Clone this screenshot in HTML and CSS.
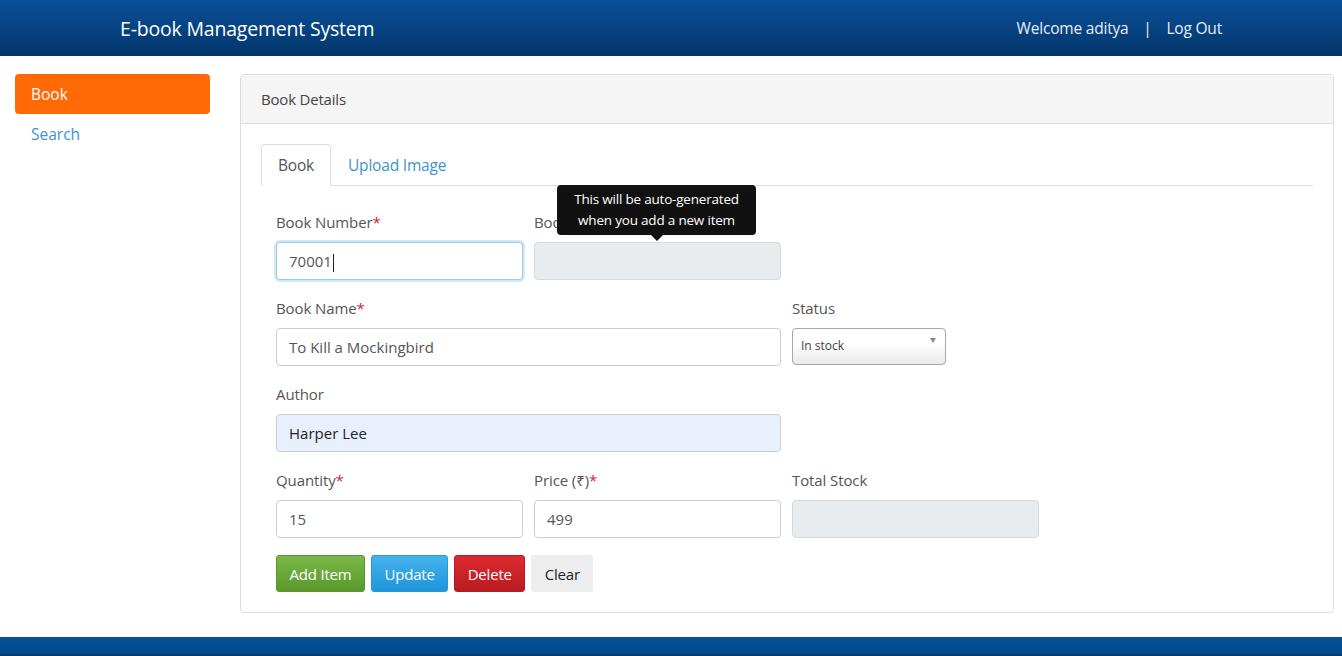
FILE: index.html
```html
<!DOCTYPE html>
<html>
<head>
<meta charset="utf-8">
<title>E-book Management System</title>
<link rel="stylesheet" href="styles.css">
</head>
<body>
<header class="topbar">
  <div class="brand">E-book Management System</div>
  <div class="user">Welcome aditya <span class="sep">|</span> Log Out</div>
</header>
<div class="main">
  <nav class="sidebar">
    <a class="side-link active">Book</a>
    <a class="side-link">Search</a>
  </nav>
  <section class="panel">
    <div class="panel-head">Book Details</div>
    <div class="panel-body">
      <div class="tabs">
        <div class="tab active">Book</div>
        <div class="tab">Upload Image</div>
      </div>
      <div class="form">
        <div class="row">
          <div class="field">
            <label class="lbl">Book Number<span class="req">*</span></label>
            <div class="input focus">70001<span class="caret"></span></div>
          </div>
          <div class="field has-tip">
            <label class="lbl">Book Id</label>
            <div class="input disabled"></div>
            <div class="tip">This will be auto-generated<br>when you add a new item</div>
          </div>
        </div>
        <div class="row">
          <div class="field span2">
            <label class="lbl">Book Name<span class="req">*</span></label>
            <div class="input">To Kill a Mockingbird</div>
          </div>
          <div class="field">
            <label class="lbl">Status</label>
            <div class="select">In stock<span class="arrow"></span></div>
          </div>
        </div>
        <div class="row">
          <div class="field span2">
            <label class="lbl">Author</label>
            <div class="input autofill">Harper Lee</div>
          </div>
        </div>
        <div class="row">
          <div class="field">
            <label class="lbl">Quantity<span class="req">*</span></label>
            <div class="input">15</div>
          </div>
          <div class="field">
            <label class="lbl">Price (₹)<span class="req">*</span></label>
            <div class="input">499</div>
          </div>
          <div class="field">
            <label class="lbl">Total Stock</label>
            <div class="input disabled"></div>
          </div>
        </div>
        <div class="buttons">
          <button class="btn btn-green">Add Item</button>
          <button class="btn btn-blue">Update</button>
          <button class="btn btn-red">Delete</button>
          <button class="btn btn-light">Clear</button>
        </div>
      </div>
    </div>
  </section>
</div>
<footer class="footer"></footer>
</body>
</html>
```
FILE: styles.css
```css
* { box-sizing: border-box; }
body {
  margin: 0;
  font-family: "Open Sans", "Noto Sans", sans-serif;
  color: #555;
  background: #fff;
}
.topbar {
  height: 56px;
  background: linear-gradient(#0a4f98, #03366b);
  display: flex;
  align-items: center;
  justify-content: space-between;
  padding: 0 120px;
  color: #fff;
}
.brand { font-size: 19.5px; letter-spacing: -0.2px; }
.user { font-size: 15.5px; color: #e8eef6; letter-spacing: -0.2px; }
.sep { margin: 0 11px; }
.main {
  display: flex;
  padding: 18px 8px 0 15px;
}
.sidebar {
  width: 195px;
  margin-right: 30px;
  display: flex;
  flex-direction: column;
}
.side-link {
  display: block;
  height: 40px;
  line-height: 40px;
  padding-left: 16px;
  font-size: 15.5px;
  color: #3d93d2;
  border-radius: 4px;
}
.side-link.active { background: #ff6a07; color: #fff; }
.panel {
  flex: 1;
  border: 1px solid #ddd;
  border-radius: 4px;
}
.panel-head {
  height: 49px;
  line-height: 49px;
  background: #f5f5f5;
  border-bottom: 1px solid #ddd;
  border-radius: 4px 4px 0 0;
  padding-left: 20px;
  font-size: 15px;
  color: #444;
  letter-spacing: -0.2px;
}
.panel-body { padding: 20px; }
.tabs {
  display: flex;
  border-bottom: 1px solid #ddd;
  height: 42px;
}
.tab {
  height: 42px;
  line-height: 40px;
  padding: 0 16px;
  font-size: 15.5px;
  color: #3d93d2;
  border: 1px solid transparent;
  border-radius: 4px 4px 0 0;
  letter-spacing: -0.2px;
}
.tab.active {
  color: #555;
  border-color: #ddd;
  border-bottom-color: #fff;
  background: #fff;
}
.form { padding: 26px 15px 0 15px; }
.row {
  display: grid;
  grid-template-columns: 247px 247px 247px;
  column-gap: 11px;
  margin-bottom: 18px;
}
.field { position: relative; }
.span2 { grid-column: span 2; }
.lbl {
  display: block;
  height: 20px;
  line-height: 20px;
  margin-bottom: 10px;
  font-size: 15px;
  color: #555;
  letter-spacing: -0.1px;
}
.req { color: #d9232e; }
.input {
  height: 38px;
  line-height: 36px;
  border: 1px solid #ccc;
  border-radius: 4px;
  padding: 0 12px;
  font-size: 15px;
  color: #555;
  background: #fff;
}
.input.focus {
  border-color: #9ccbe8;
  box-shadow: 0 0 0 2px #d2e8f7;
}
.caret {
  display: inline-block;
  width: 1px;
  height: 18px;
  background: #222;
  vertical-align: middle;
  margin-left: 1px;
}
.input.disabled { background: #e9ecef; border-color: #d6d9dc; }
.input.autofill { background: #e8f0fe; color: #222; }
.select {
  position: relative;
  width: 154px;
  height: 37px;
  line-height: 34px;
  border: 1px solid #a8a8a8;
  border-radius: 4px;
  padding: 0 8px;
  font-size: 12px;
  color: #444;
  background: linear-gradient(#fff 40%, #eaeaea);
}
.arrow {
  position: absolute;
  right: 9px;
  top: 9px;
  width: 0;
  height: 0;
  border-left: 3.5px solid transparent;
  border-right: 3.5px solid transparent;
  border-top: 5px solid #888;
}
.tip {
  position: absolute;
  left: 23px;
  top: -27px;
  width: 199px;
  height: 50px;
  background: #111;
  color: #fff;
  border-radius: 4px;
  font-size: 13.5px;
  line-height: 21px;
  padding-top: 4px;
  text-align: center;
  letter-spacing: -0.2px;
}
.tip::after {
  content: "";
  position: absolute;
  left: 94px;
  bottom: -6px;
  border-left: 6px solid transparent;
  border-right: 6px solid transparent;
  border-top: 6px solid #111;
}
.buttons {
  display: flex;
  gap: 6px;
  margin-top: -1px;
}
.btn {
  height: 37px;
  padding: 0 12.5px;
  font-family: inherit;
  font-size: 15px;
  border-radius: 3px;
  border: 1px solid transparent;
  color: #fff;
  letter-spacing: -0.2px;
}
.btn-green { background: linear-gradient(#7bb84a, #5a982c); border-color: #5a942e; }
.btn-blue { background: linear-gradient(#45b2ec, #1f95da); border-color: #2a98d8; }
.btn-red { background: linear-gradient(#dd2a31, #b91b21); border-color: #b21c22; }
.btn-light { background: #eee; color: #222; }
.footer {
  margin-top: 24px;
  height: 40px;
  background: linear-gradient(#064f94 0, #044a8c 40%, #021a3a 60%, #01102a 100%);
}
```
